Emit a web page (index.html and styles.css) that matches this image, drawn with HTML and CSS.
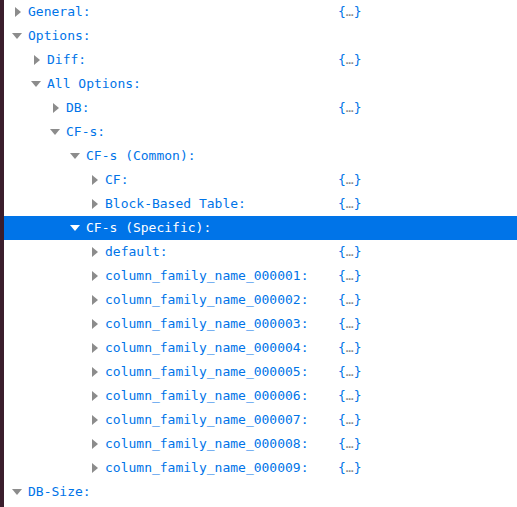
FILE: index.html
```html
<!DOCTYPE html>
<html>
<head>
<meta charset="utf-8">
<link rel="stylesheet" href="styles.css">
</head>
<body>
<div class="page">
  <div class="strip"></div>
  <div class="tree">
    <div class="row l0"><span class="label"><span class="twisty"><svg viewBox="0 0 10 10"><path d="M3 0 L9 5 L3 10 Z"/></svg></span>General:</span><span class="val">{<i>…</i>}</span></div>
    <div class="row l0"><span class="label"><span class="twisty"><svg viewBox="0 0 10 10"><path d="M0 2 L10 2 L5 8 Z"/></svg></span>Options:</span></div>
    <div class="row l1"><span class="label"><span class="twisty"><svg viewBox="0 0 10 10"><path d="M3 0 L9 5 L3 10 Z"/></svg></span>Diff:</span><span class="val">{<i>…</i>}</span></div>
    <div class="row l1"><span class="label"><span class="twisty"><svg viewBox="0 0 10 10"><path d="M0 2 L10 2 L5 8 Z"/></svg></span>All Options:</span></div>
    <div class="row l2"><span class="label"><span class="twisty"><svg viewBox="0 0 10 10"><path d="M3 0 L9 5 L3 10 Z"/></svg></span>DB:</span><span class="val">{<i>…</i>}</span></div>
    <div class="row l2"><span class="label"><span class="twisty"><svg viewBox="0 0 10 10"><path d="M0 2 L10 2 L5 8 Z"/></svg></span>CF-s:</span></div>
    <div class="row l3"><span class="label"><span class="twisty"><svg viewBox="0 0 10 10"><path d="M0 2 L10 2 L5 8 Z"/></svg></span>CF-s (Common):</span></div>
    <div class="row l4"><span class="label"><span class="twisty"><svg viewBox="0 0 10 10"><path d="M3 0 L9 5 L3 10 Z"/></svg></span>CF:</span><span class="val">{<i>…</i>}</span></div>
    <div class="row l4"><span class="label"><span class="twisty"><svg viewBox="0 0 10 10"><path d="M3 0 L9 5 L3 10 Z"/></svg></span>Block-Based Table:</span><span class="val">{<i>…</i>}</span></div>
    <div class="row l3 selected"><span class="label"><span class="twisty"><svg viewBox="0 0 10 10"><path d="M0 2 L10 2 L5 8 Z"/></svg></span>CF-s (Specific):</span></div>
    <div class="row l4"><span class="label"><span class="twisty"><svg viewBox="0 0 10 10"><path d="M3 0 L9 5 L3 10 Z"/></svg></span>default:</span><span class="val">{<i>…</i>}</span></div>
    <div class="row l4"><span class="label"><span class="twisty"><svg viewBox="0 0 10 10"><path d="M3 0 L9 5 L3 10 Z"/></svg></span>column_family_name_000001:</span><span class="val">{<i>…</i>}</span></div>
    <div class="row l4"><span class="label"><span class="twisty"><svg viewBox="0 0 10 10"><path d="M3 0 L9 5 L3 10 Z"/></svg></span>column_family_name_000002:</span><span class="val">{<i>…</i>}</span></div>
    <div class="row l4"><span class="label"><span class="twisty"><svg viewBox="0 0 10 10"><path d="M3 0 L9 5 L3 10 Z"/></svg></span>column_family_name_000003:</span><span class="val">{<i>…</i>}</span></div>
    <div class="row l4"><span class="label"><span class="twisty"><svg viewBox="0 0 10 10"><path d="M3 0 L9 5 L3 10 Z"/></svg></span>column_family_name_000004:</span><span class="val">{<i>…</i>}</span></div>
    <div class="row l4"><span class="label"><span class="twisty"><svg viewBox="0 0 10 10"><path d="M3 0 L9 5 L3 10 Z"/></svg></span>column_family_name_000005:</span><span class="val">{<i>…</i>}</span></div>
    <div class="row l4"><span class="label"><span class="twisty"><svg viewBox="0 0 10 10"><path d="M3 0 L9 5 L3 10 Z"/></svg></span>column_family_name_000006:</span><span class="val">{<i>…</i>}</span></div>
    <div class="row l4"><span class="label"><span class="twisty"><svg viewBox="0 0 10 10"><path d="M3 0 L9 5 L3 10 Z"/></svg></span>column_family_name_000007:</span><span class="val">{<i>…</i>}</span></div>
    <div class="row l4"><span class="label"><span class="twisty"><svg viewBox="0 0 10 10"><path d="M3 0 L9 5 L3 10 Z"/></svg></span>column_family_name_000008:</span><span class="val">{<i>…</i>}</span></div>
    <div class="row l4"><span class="label"><span class="twisty"><svg viewBox="0 0 10 10"><path d="M3 0 L9 5 L3 10 Z"/></svg></span>column_family_name_000009:</span><span class="val">{<i>…</i>}</span></div>
    <div class="row l0"><span class="label"><span class="twisty"><svg viewBox="0 0 10 10"><path d="M0 2 L10 2 L5 8 Z"/></svg></span>DB-Size:</span></div>
  </div>
</div>
</body>
</html>
```
FILE: styles.css
```css
html, body {
  margin: 0;
  padding: 0;
  background: #ffffff;
}
.page {
  display: flex;
  width: 517px;
  height: 507px;
  overflow: hidden;
}
.strip {
  width: 4px;
  flex: none;
  background: #3a1d2c;
}
.tree {
  flex: 1;
  display: flex;
  flex-direction: column;
  font-family: "DejaVu Sans Mono", monospace;
  font-size: 13px;
  color: #0074e8;
}
.row {
  display: flex;
  align-items: center;
  height: 24px;
  line-height: 24px;
  white-space: pre;
}
.label {
  display: flex;
  align-items: center;
  width: 334px;
  flex: none;
  box-sizing: border-box;
}
.l0 .label { padding-left: 8px; }
.l1 .label { padding-left: 27px; }
.l2 .label { padding-left: 46px; }
.l3 .label { padding-left: 66px; }
.l4 .label { padding-left: 85px; }
.twisty {
  display: flex;
  align-items: center;
  width: 16px;
  height: 24px;
  flex: none;
}
.twisty svg {
  width: 10px;
  height: 10px;
  fill: #8c8c8c;
}
.val i {
  font-style: normal;
  color: #8a8a8a;
}
.selected {
  background: #0074e8;
  color: #ffffff;
}
.selected .twisty svg {
  fill: #ffffff;
}
```
